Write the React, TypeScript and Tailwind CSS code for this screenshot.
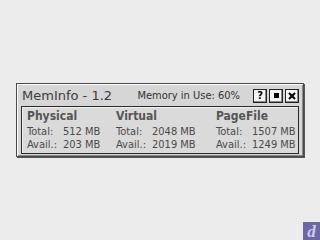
export default function App() {
  const cols = [
    { name: 'Physical', total: '512 MB', avail: '203 MB', w: 'w-[89px]' },
    { name: 'Virtual', total: '2048 MB', avail: '2019 MB', w: 'w-[100px]' },
    { name: 'PageFile', total: '1507 MB', avail: '1249 MB', w: 'w-[80px]' },
  ];

  return (
    <div
      className="relative h-[240px] w-[320px] overflow-hidden bg-[#ececec] pt-[83px] pl-[16px]"
      style={{ fontFamily: '"DejaVu Sans Condensed", "DejaVu Sans", sans-serif' }}
    >
      <div className="w-[288px] h-[74px] border border-[#4a4a4a] bg-[#d6d6d6] shadow-[inset_1px_1px_0_#ffffff,inset_-1px_-1px_0_#8a8a8a,1px_1px_0_#555]">
        <div className="flex items-center h-[19px] mt-[2px] pl-[5px] pr-[4px]">
          <span className="text-[13px] leading-none text-[#3c3c3c]" style={{ fontFamily: '"DejaVu Sans", sans-serif' }}>MemInfo - 1.2</span>
          <span className="ml-auto mr-[13px] text-[11px] leading-none text-[#333]">Memory in Use: 60%</span>
          <div className="flex gap-[2px]">
            <button className="w-[14px] h-[14px] flex items-center justify-center bg-[#f4f4f4] border border-[#222] shadow-[inset_-1px_-1px_0_#888] text-[11px] font-bold leading-none text-black">?</button>
            <button className="w-[14px] h-[14px] flex items-center justify-center bg-[#f4f4f4] border border-[#222] shadow-[inset_-1px_-1px_0_#888]">
              <span className="block w-[5px] h-[5px] bg-black" />
            </button>
            <button className="w-[14px] h-[14px] flex items-center justify-center bg-[#f4f4f4] border border-[#222] shadow-[inset_-1px_-1px_0_#888]">
              <svg width="8" height="8" viewBox="0 0 8 8">
                <path d="M1 1 L7 7 M7 1 L1 7" stroke="#000" strokeWidth="2" />
              </svg>
            </button>
          </div>
        </div>
        <div className="mx-[4px] mt-[1px] h-[48px] border border-[#2a2a2a] bg-[#dadada] shadow-[inset_1px_1px_0_#f0f0f0] flex pl-[5px] pt-[2px]">
          {cols.map((c) => (
            <div key={c.name} className={c.w + ' flex flex-col text-[#4a4a4a] whitespace-nowrap'}>
              <div className="text-[12px] font-bold leading-[14px] h-[16px] text-[#555]">{c.name}</div>
              <div className="flex text-[11px] leading-[13px]">
                <span className="w-[36px]">Total:</span>
                <span>{c.total}</span>
              </div>
              <div className="flex text-[11px] leading-[13px]">
                <span className="w-[36px]">Avail.:</span>
                <span>{c.avail}</span>
              </div>
            </div>
          ))}
        </div>
      </div>
      <div className="absolute right-0 bottom-0 w-[17px] h-[18px] bg-[#6a68a6] flex items-end justify-center">
        <span className="text-[17px] leading-[17px] font-bold italic text-[#cfcfe8]" style={{ fontFamily: '"Liberation Serif", serif' }}>d</span>
      </div>
    </div>
  );
}
